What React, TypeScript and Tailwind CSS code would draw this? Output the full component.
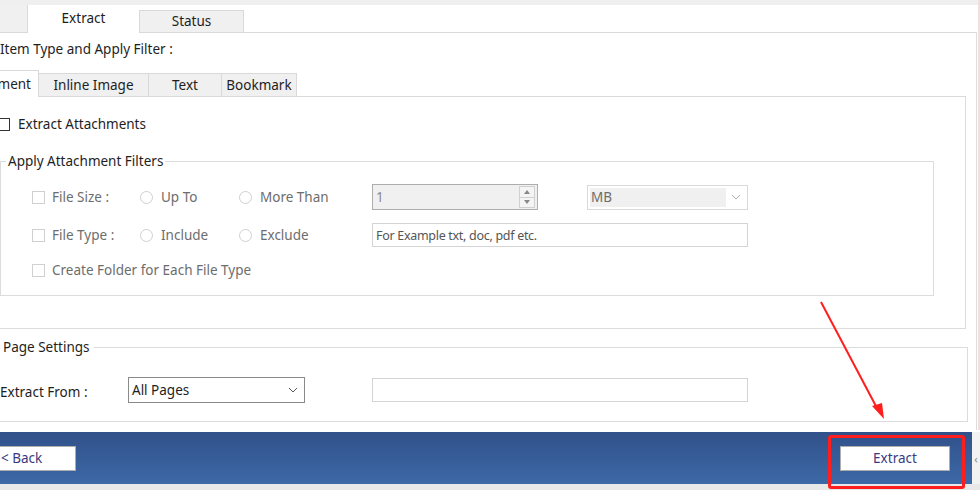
import React from 'react';
import clsx from 'clsx';

const Check = ({ disabled = false }: { disabled?: boolean }) => (
  <span
    className={clsx(
      'inline-block h-[13px] w-[13px] shrink-0 border bg-white',
      disabled ? 'border-[#d0d0d0]' : 'border-[#333333]'
    )}
  />
);

const Radio = () => (
  <span className="inline-block h-[13px] w-[13px] shrink-0 rounded-full border border-[#d0d0d0] bg-white" />
);

const Chevron = ({ color }: { color: string }) => (
  <svg width="10" height="6" viewBox="0 0 10 6" fill="none">
    <path d="M1 1l4 4 4-4" stroke={color} strokeWidth="1" />
  </svg>
);

export default function App() {
  return (
    <div className="relative flex h-[490px] w-[980px] flex-col overflow-hidden bg-white font-['Noto_Sans',sans-serif] text-[13.5px] leading-[19px] text-[#1e1e1e]">
      <div className="h-[5px] shrink-0 bg-[#efefef]" />

      {/* top tabs */}
      <div className="flex h-[28px] w-[977px] shrink-0 items-end">
        <div className="h-full w-[28px] border-r border-b border-[#d9d9d9] bg-[#f0f0f0]" />
        <div className="flex h-full w-[111px] items-center justify-center bg-white pb-[1px]">Extract</div>
        <div className="flex h-[23px] w-[105px] items-center justify-center border-x border-t border-b border-[#d9d9d9] bg-[#f0f0f0]">
          Status
        </div>
        <div className="h-full flex-1 border-b border-[#d9d9d9]" />
      </div>

      {/* outer panel */}
      <div className="flex h-[397px] w-[977px] shrink-0 flex-col border-r border-[#dcdcdc]">
        <div className="pt-[7px] whitespace-nowrap">Item Type and Apply Filter :</div>

        {/* inner tabs */}
        <div className="mt-[11px] flex h-[27px] w-[966px] items-end">
          <div className="flex h-full w-[39px] items-center justify-end overflow-hidden border-r border-t border-[#d9d9d9] bg-white pr-[7px] whitespace-nowrap">
            Attachment
          </div>
          {['Inline Image', 'Text', 'Bookmark'].map((t, i) => (
            <div
              key={t}
              className={clsx(
                'flex h-[24px] items-center justify-center border-r border-t border-b border-[#d9d9d9] bg-[#f0f0f0] whitespace-nowrap',
                i === 0 && 'w-[110px]',
                i === 1 && 'w-[73px]',
                i === 2 && 'w-[75px]'
              )}
            >
              {t}
            </div>
          ))}
          <div className="h-full flex-1 border-b border-[#d9d9d9]" />
        </div>

        {/* inner panel */}
        <div className="flex h-[232px] w-[966px] shrink-0 flex-col border-r border-b border-[#dcdcdc]">
          <div className="mt-[20px] ml-[-3px] flex h-[14px] items-center gap-[8px]">
            <Check />
            <span>Extract Attachments</span>
          </div>

          <fieldset className="mt-[21px] w-[934px] border border-[#dcdcdc] pb-[15px]">
            <legend className="ml-[5px] px-[2px] text-[#1e1e1e]">Apply Attachment Filters</legend>
            <div className="mt-[13px] flex flex-col gap-[13px] pl-[31px] text-[#6d6d6d]">
              {/* row 1 */}
              <div className="flex h-[26px] items-center">
                <div className="flex w-[108px] items-center gap-[7px]">
                  <Check disabled />
                  <span>File Size :</span>
                </div>
                <div className="flex w-[99px] items-center gap-[8px]">
                  <Radio />
                  <span>Up To</span>
                </div>
                <div className="flex w-[133px] items-center gap-[8px]">
                  <Radio />
                  <span>More Than</span>
                </div>
                <div className="flex h-[26px] w-[166px] items-center justify-between border border-[#adadad] bg-[#f0f0f0] pl-[3px] pr-[2px] text-[#8a8a8a]">
                  <span>1</span>
                  <div className="flex h-[22px] w-[16px] flex-col border border-[#d0d0d0] bg-[#f4f4f4]">
                    <div className="flex flex-1 items-center justify-center border-b border-[#d0d0d0]">
                      <span className="block h-0 w-0 border-x-[3px] border-b-[4px] border-x-transparent border-b-[#888]" />
                    </div>
                    <div className="flex flex-1 items-center justify-center">
                      <span className="block h-0 w-0 border-x-[3px] border-t-[4px] border-x-transparent border-t-[#888]" />
                    </div>
                  </div>
                </div>
                <div className="ml-[49px] flex h-[25px] w-[161px] items-center border border-[#d9d9d9] bg-white p-[2px]">
                  <div className="flex h-full w-[136px] items-center bg-[#f0f0f0] pl-[1px]">MB</div>
                  <div className="flex flex-1 items-center justify-center">
                    <Chevron color="#b0b0b0" />
                  </div>
                </div>
              </div>

              {/* row 2 */}
              <div className="flex h-[24px] items-center">
                <div className="flex w-[108px] items-center gap-[7px]">
                  <Check disabled />
                  <span>File Type :</span>
                </div>
                <div className="flex w-[99px] items-center gap-[8px]">
                  <Radio />
                  <span>Include</span>
                </div>
                <div className="flex w-[133px] items-center gap-[8px]">
                  <Radio />
                  <span>Exclude</span>
                </div>
                <div className="flex h-[24px] w-[376px] items-center border border-[#d4d4d4] bg-white pl-[3px] text-[12.5px] tracking-[-0.3px] text-[#555]">
                  For Example txt, doc, pdf etc.
                </div>
              </div>

              {/* row 3 */}
              <div className="flex h-[20px] items-center gap-[7px]">
                <Check disabled />
                <span>Create Folder for Each File Type</span>
              </div>
            </div>
          </fieldset>
        </div>

        {/* page settings */}
        <fieldset className="ml-[-10px] mt-[9px] h-[84px] w-[978px] border border-[#dcdcdc] pl-[8px]">
          <legend className="px-[4px]">Page Settings</legend>
          <div className="mt-[20px] flex items-center">
            <span className="mt-[5px] w-[129px] pl-[1px] whitespace-nowrap">Extract From :</span>
            <div className="flex h-[26px] w-[177px] items-center justify-between border border-[#8a8a8a] bg-white pl-[3px] pr-[6px]">
              <span>All Pages</span>
              <Chevron color="#555" />
            </div>
            <div className="ml-[67px] h-[24px] w-[376px] border border-[#d4d4d4] bg-white" />
          </div>
        </fieldset>
      </div>

      <div className="h-[2px] shrink-0" />

      {/* footer bar */}
      <div className="flex h-[52px] w-[980px] shrink-0 bg-[#f2f2f2]">
        <div className="flex h-full w-[972px] items-start justify-between bg-gradient-to-b from-[#31518a] to-[#3c69a7] pt-[14px]">
          <button
            type="button"
            className="ml-[-10px] h-[25px] w-[86px] border border-[#adadad] bg-white pl-[10px] text-left text-[13.5px] text-[#3a3a7e]"
          >
            &lt; Back
          </button>
          <button
            type="button"
            className="mr-[22px] h-[25px] w-[110px] border border-[#adadad] bg-white text-[13.5px] text-[#3a3a7e]"
          >
            Extract
          </button>
        </div>
        <div className="flex flex-1 items-center justify-center text-[11px] text-[#888]">‹</div>
      </div>
      <div className="flex-1 bg-[#e8e8e8]" />

      {/* annotation overlay */}
      <div className="pointer-events-none absolute left-[828px] top-[435px] h-[54px] w-[137px] rounded-[3px] border-[3px] border-[#ff1e1e]" />
      <svg className="pointer-events-none absolute left-0 top-0" width="980" height="490" viewBox="0 0 980 490">
        <line x1="821" y1="302" x2="878" y2="410" stroke="#ff1e1e" strokeWidth="2" />
        <polygon points="884,419 872,406 882,403" fill="#ff1e1e" />
      </svg>
      <div className="absolute right-0 top-0 h-[430px] w-[2px] bg-[#f3dede]" />
    </div>
  );
}
